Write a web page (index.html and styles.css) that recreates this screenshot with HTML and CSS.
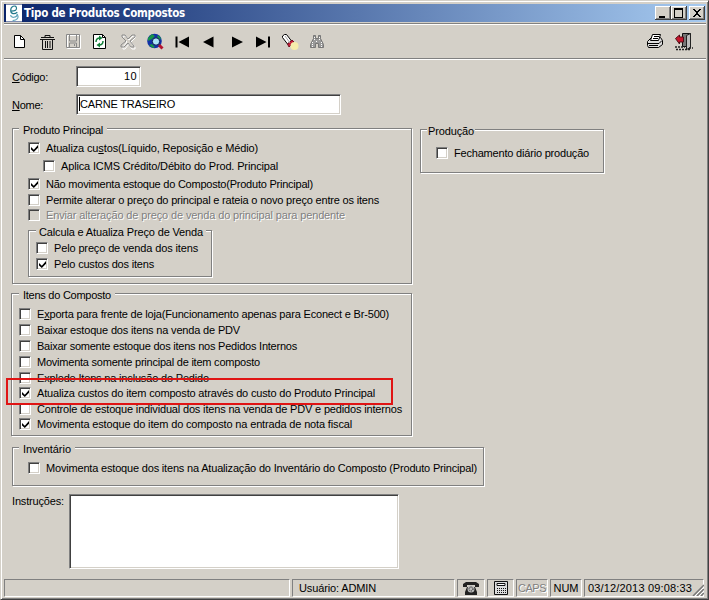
FILE: index.html
```html
<!DOCTYPE html>
<html lang="pt-BR">
<head>
<meta charset="utf-8">
<title>Tipo de Produtos Compostos</title>
<link rel="stylesheet" href="styles.css">
</head>
<body>
<div class="window">
  <header class="titlebar">
    <svg class="logo" viewBox="0 0 17 18"><path fill="#fff" d="M0 0h17v18H0z"/><path d="M5 7c5 0 7-1 6-4S5 2 5 6s4 5 7 2" fill="none" stroke="#247a8c" stroke-width="1.300"/><path d="M5 11c0 4 7 3 7-1 2 4 0 7-5 7" fill="none" stroke="#69a9bd" stroke-width="1.300"/></svg>
    <h1 data-width="161">Tipo de Produtos Compostos</h1>
    <div class="controls">
      <button aria-label="Minimizar"><svg viewBox="0 0 16 14"><path d="M4 10h6v2H4z"/></svg></button>
      <button aria-label="Maximizar"><svg viewBox="0 0 16 14"><path fill-rule="evenodd" d="M3 2h9v10H3zM4 4v7h7V4z"/></svg></button>
      <button class="close" aria-label="Fechar"><svg viewBox="0 0 16 14"><path d="M4 3h2v1h1v1h2V4h1V3h2v1h-1v1h-1v1H9v2h1v1h1v1h1v1h-2v-1H9V9H7v1H6v1H4v-1h1V9h1V8h1V6H6V5H5V4H4z"/></svg></button>
    </div>
  </header>
  <nav class="toolbar">
    <svg class="new" viewBox="0 0 18 18"><path d="M4.500 2.500h6l4 4v8h-10z" fill="#fff" stroke="#000"/><path d="M10.500 2.500v4h4" fill="none" stroke="#000"/></svg>
    <svg class="trash" viewBox="0 0 18 18"><path d="M3 4.500h13M7 4V2.500h5V4M2 6.500h15M4.500 7v9.500h10V7M7.500 8v7M9.500 8v7M12 8v7" fill="none" stroke="#111"/></svg>
    <svg class="save" viewBox="0 0 18 18"><path d="M3.500 2.500h13v13h-13z" fill="none" stroke="#fff"/><path d="M2.500 1.500h13v13h-13zM5.500 2v6h7V2M5.500 14v-4h7v4M10.500 11v2" fill="none" stroke="#888"/></svg>
    <svg class="refresh" viewBox="0 0 18 18"><path d="M3.500 1.500h9l3 3v11h-12z" fill="#fff" stroke="#000"/><path d="M12.500 1.500v3h3" fill="none" stroke="#000"/><path d="M6 9c0-3 2-4 4-4M13 8c0 3-2 4-4 4" fill="none" stroke="#14803a" stroke-width="1.500"/><path d="M9 2.500l3.500 2.500L9 7.500zM10 9.500v5L6.500 12z" fill="#14803a"/></svg>
    <svg class="cancel" viewBox="0 0 18 18"><path d="M4 3h3l3 4 4-4h2v2l-4 4 4 5v2h-3l-3-5-4 5H4v-2l4-5-4-4z" fill="none" stroke="#fff"/><path d="M3 2h3l3 4 4-4h3v2l-5 4 4 5v1h-3l-3-4-4 4H2v-2l5-4-4-4z" fill="none" stroke="#8b8b8b"/></svg>
    <svg class="search" viewBox="0 0 18 18"><circle cx="8.500" cy="8" r="7.300" fill="#102fa8"/><path d="M2 5l4-4 3 2-3 3-4 2zM12 2l3 3-1 2-3-3zM3 12l3-1 3 3-2 1z" fill="#159449"/><circle cx="10" cy="8.500" r="3.700" fill="#a9e4f6" stroke="#081b50"/><path d="M13 12l3.500 3.500" stroke="#b3132f" stroke-width="3"/></svg>
    <svg class="first" viewBox="0 0 18 18"><path d="M2.500 3.500h2v11h-2zM16 3.500v11L5.500 9z"/></svg>
    <svg class="prev" viewBox="0 0 18 18"><path d="M14.500 3.500v11L4 9z"/></svg>
    <svg class="next" viewBox="0 0 18 18"><path d="M5 3.500v11L16 9z"/></svg>
    <svg class="last" viewBox="0 0 18 18"><path d="M2 3.500v11L12.500 9zM14 3.500h2v11h-2z"/></svg>
    <svg class="torch" viewBox="0 0 18 18"><path d="M1.500 3l2-1.500h2l5 6.500-4 3-5-6.500z" fill="#fff" stroke="#000"/><path d="M11 7l2 2-5 5-1.500-3z" fill="#c51a38" stroke="#721020"/><circle cx="13.500" cy="13" r="4" fill="#f6edac"/><path d="M4 3l5 7" stroke="#aaa"/></svg>
    <svg class="binoculars" viewBox="0 0 18 18"><path d="M5.500 2.500h2v3h3v-3h2v3l3 6v3h-5v-4h-3v4h-5v-3l3-6z" fill="#999" stroke="#777"/><path d="M6.500 4v3m5-3v3M4.500 9v5m9-5v5M8 8.500h2" stroke="#fff" stroke-dasharray="1 1"/></svg>
    <svg class="printer" viewBox="0 0 18 18"><path d="M1.500 8.500l4-4h9l2 3v4l-4 3h-10l-1-2z" fill="#ddd" stroke="#000"/><path d="M4.500 7.500l2-6h8l-2 6z" fill="#fff" stroke="#000"/><path d="M8 3.500h5M7 5.500h5M2 10.500h11l3-3M3 12.500h9" fill="none" stroke="#000"/></svg>
    <svg class="exit" viewBox="0 0 18 18"><path d="M7.500.5h8v13h-8z" fill="#777" stroke="#111"/><path d="M11.500 2.500l4-2v14l-4 2z" fill="#bbb" stroke="#222"/><path d="M.5 5.500l4-3.500v2h4v5h-4v2z" fill="#c7172e" stroke="#4e1018"/><path d="M0 14h10M14 15h4M1 16.500h14" stroke="#222" stroke-width="1.500" stroke-dasharray="2 1"/></svg>
  </nav>

  <main>
    <div class="field code"><label for="codigo" data-width="36"><u>C</u>ódigo:</label><div class="input" id="codigo"><span data-width="13">10</span></div></div>
    <div class="field name"><label for="nome" data-width="31"><u>N</u>ome:</label><div class="input" id="nome"><i></i><span data-width="95">CARNE TRASEIRO</span></div></div>
    <div class="columns">
      <section class="group product">
        <h2 data-width="80">Produto Principal</h2>
        <div class="check r18"><b class="on"></b><span data-width="212">Atualiza cu<u>s</u>tos(Líquido, Reposição e Médio)</span></div>
        <div class="check r18 indent"><b></b><span data-width="217">Aplica ICMS Crédito/Débito do Prod. Principal</span></div>
        <div class="check r18"><b class="on"></b><span data-width="267">Não movimenta estoque do Composto(Produto Principal)</span></div>
        <div class="check r14"><b></b><span data-width="333">Permite alterar o preço do principal e rateia o novo preço entre os itens</span></div>
        <div class="check disabled"><b></b><span data-width="299">Enviar alteração de preço de venda do principal para pendente</span></div>
        <section class="group sale">
          <h2 data-width="164">Calcula e Atualiza Preço de Venda</h2>
          <div class="check"><b></b><span data-width="144">Pelo preço de venda dos itens</span></div>
          <div class="check"><b class="on"></b><span data-width="100">Pelo custos dos itens</span></div>
        </section>
      </section>
      <section class="group production">
        <h2 data-width="46">Produção</h2>
        <div class="check"><b></b><span data-width="135">Fechamento diário produção</span></div>
      </section>
    </div>
    <section class="group items">
      <h2 data-width="88">Itens do Composto</h2>
      <div class="check"><b></b><span data-width="352">E<u>x</u>porta para frente de loja(Funcionamento apenas para Econect e Br-500)</span></div>
      <div class="check"><b></b><span data-width="203">Baixar estoque dos itens na venda de PDV</span></div>
      <div class="check"><b></b><span data-width="260">Baixar somente estoque dos itens nos Pedidos Internos</span></div>
      <div class="check"><b></b><span data-width="223">Movimenta somente principal de item composto</span></div>
      <div class="check r15"><b></b><span data-width="172">Explode Itens na inclusão do Pedido</span></div>
      <div class="check highlighted"><b class="on"></b><span data-width="338">Atualiza custos do item composto através do custo do Produto Principal</span></div>
      <div class="check r15"><b></b><span data-width="365">Controle de estoque individual dos itens na venda de PDV e pedidos internos</span></div>
      <div class="check"><b class="on"></b><span data-width="315">Movimenta estoque do item do composto na entrada de nota fiscal</span></div>
    </section>
    <section class="group inventory">
      <h2 data-width="48">Inventário</h2>
      <div class="check"><b></b><span data-width="431">Movimenta estoque dos itens na Atualização do Inventário do Composto (Produto Principal)</span></div>
    </section>
    <div class="instructions"><label data-width="52">Instruções:</label><div class="input"></div></div>
  </main>

  <footer class="status">
    <div></div>
    <div class="user"><span data-width="77">Usuário: ADMIN</span></div>
    <div><svg viewBox="0 0 18 14"><path d="M1 5V3l3-2h10l3 2v3h-4V4H5v2H1zM5 6h8l2 5v3H3v-3z" fill="#222"/><circle cx="9" cy="8" r="3.500" fill="#bbb"/><circle cx="9" cy="8" r="2" fill="none" stroke="#111" stroke-dasharray="1 1"/></svg></div>
    <div><svg viewBox="0 0 18 14"><path d="M2.500.5h13v13h-13z" fill="#ddd" stroke="#111"/><path d="M5 2.500h8v2H5z" fill="#fff" stroke="#111"/><path d="M5 7.500h9M5 9.500h9M5 11.500h9" stroke="#111" stroke-dasharray="1 1"/></svg></div>
    <div class="off"><span data-width="28">CAPS</span></div>
    <div><span data-width="25">NUM</span></div>
    <div class="clock"><span data-width="104">03/12/2013 09:08:33</span><svg class="grip" viewBox="0 0 12 12"><path d="M1 12L12 1M5 12l7-7M9 12l3-3" stroke="#777" stroke-width="1.500"/><path d="M3 12l9-9M7 12l5-5" stroke="#fff"/></svg></div>
  </footer>
</div>
<script src="script.js"></script>
</body>
</html>
```
FILE: styles.css
```css
*, *::before, *::after { box-sizing: border-box; }
body { margin: 0; background: #d4d0c8; }
body, button { font: 11px/14px "Liberation Sans", Arial, sans-serif; color: #000; }
h1, h2 { margin: 0; font-size: 11px; line-height: 14px; font-weight: normal; }
[data-width] { white-space: pre; flex: none; }
u { text-decoration: underline; text-underline-offset: 1px; text-decoration-thickness: 1px; }

.window {
  width: 709px; height: 600px; padding: 3px 2px 2px 3px;
  display: flex; flex-direction: column;
  background: #d4d0c8;
  border: 1px solid; border-color: #d4d0c8 #404040 #404040 #d4d0c8;
  box-shadow: inset 1px 1px #fff, inset -1px -1px #808080;
}
.titlebar {
  height: 18px; flex: none; display: flex; align-items: center;
  padding: 0 1px 0 2px; color: #fff;
  background: linear-gradient(90deg, #0a246a, #a6caf0);
}
.titlebar h1 { font: bold 11.5px/18px "DejaVu Sans Condensed", "DejaVu Sans", sans-serif; }
.logo { width: 16px; height: 18px; margin-right: 2px; }
.controls { margin-left: auto; display: flex; }
.controls button {
  width: 16px; height: 14px; padding: 0; border: 0; background: #d4d0c8;
  box-shadow: inset -1px -1px #404040, inset 1px 1px #fff, inset -2px -2px #808080;
}
.controls svg { display: block; width: 16px; height: 14px; shape-rendering: crispEdges; }
.controls .close { margin-left: 2px; }

.toolbar {
  height: 36px; flex: none; margin-top: 1px; padding: 2px 13px 0 6px;
  display: flex; align-items: center;
  border-top: 1px solid #808080; border-bottom: 1px solid #808080;
  box-shadow: inset 0 1px #fff, 0 1px #fff;
}
.toolbar svg { width: 18px; height: 18px; flex: none; margin-left: 9px; }
.toolbar .new { margin-left: 0; }
.toolbar .trash { margin-left: 10px; }
.toolbar .save, .toolbar .refresh, .toolbar .prev { margin-left: 8px; }
.toolbar .cancel { margin-left: 11px; }
.toolbar .next { margin-left: 10px; }
.toolbar .printer { margin-left: auto; }
.toolbar .exit { margin-left: 11px; }

main { flex: none; padding: 7px 0 0 8px; }
.field { display: flex; align-items: center; height: 21px; }
.field label { flex: none; width: 64px; }
.input {
  background: #fff; border: 1px solid; border-color: #808080 #fff #fff #808080;
  box-shadow: inset 1px 1px #404040, inset -1px -1px #d4d0c8;
}
.code .input { width: 65px; height: 21px; padding: 2px 3px; text-align: right; }
.name { margin-top: 7px; }
.name .input { width: 265px; height: 21px; display: flex; align-items: center; padding: 0 0 2px 2px; }
.name i { width: 1px; height: 14px; background: #000; }

.columns { display: flex; align-items: flex-start; gap: 8px; margin-top: 13px; }
.group { border: 1px solid #808080; box-shadow: inset 1px 1px #fff, 1px 1px #fff; }
.group h2 { width: fit-content; height: 15px; margin: -7px 0 0 6px; padding: 1px 4px 0; background: #d4d0c8; }
.product { width: 400px; height: 156px; padding-left: 15px; }
.product > h2 { margin-left: -9px; margin-bottom: 2px; }
.production { width: 184px; height: 44px; margin-top: 1px; padding-left: 15px; }
.production h2 { margin-left: -9px; padding: 1px 1px 0; margin-bottom: 7px; }
.sale { width: 184px; height: 47px; padding-left: 7px; margin-top: 7px; }
.group.sale h2 { margin-left: 0; padding: 1px 3px 0; margin-bottom: 1px; }
.items { width: 401px; height: 143px; margin: 9px 0 0 -1px; padding-left: 7px; }
.items h2 { margin-left: 0; margin-bottom: 4px; }
.inventory { width: 472px; height: 39px; margin-top: 11px; padding-left: 15px; }
.inventory h2 { margin-left: -9px; margin-bottom: 4px; }

.check { display: flex; align-items: center; gap: 6px; height: 16px; }
.check b {
  width: 12px; height: 12px; flex: none; background: #fff;
  border: 1px solid; border-color: #808080 #fff #fff #808080;
  box-shadow: inset 1px 1px #404040, inset -1px -1px #d4d0c8;
}
.check .on::after { content: ""; display: block; width: 7px; height: 7px; margin: 2px 0 0 2px; background: #000; clip-path: polygon(0 28%, 40% 68%, 100% 0, 100% 38%, 40% 100%, 0 65%); }
.r18 { height: 18px; }
.r15 { height: 15px; }
.r14 { height: 14px; }
.indent { padding-left: 15px; }
.disabled { color: #808080; text-shadow: 1px 1px #fff; }
.disabled b { background: #d4d0c8; }
.highlighted { position: relative; }
.highlighted::after { content: ""; position: absolute; left: -13px; top: -7px; width: 387px; height: 27px; border: 2px solid #e01414; z-index: 1; }

.instructions { display: flex; margin-top: 8px; }
.instructions label { width: 57px; }
.instructions .input { width: 330px; height: 75px; }

.status { height: 18px; margin-top: auto; display: grid; grid-template-columns: 286px 163px 28px 27px 32px 32px 120px; gap: 2px; }
.status > div { display: flex; align-items: center; justify-content: center; min-width: 0; border: 1px solid; border-color: #808080 #fff #fff #808080; }
.status .user { justify-content: flex-start; padding-left: 6px; }
.status svg { width: 18px; height: 14px; }
.status .off { color: #808080; text-shadow: 1px 1px #fff; }
.status .clock { justify-content: flex-start; padding-left: 3px; }
.status .grip { width: 12px; height: 12px; flex: none; align-self: flex-end; margin-left: 0; }
```
FILE: script.js
```js
// Spreads each label's glyphs so that it fills its design width.
document.querySelectorAll('[data-width]').forEach(function (el) {
  var range = document.createRange();
  range.selectNodeContents(el);
  var natural = range.getBoundingClientRect().width;
  var spacing = (Number(el.dataset.width) - natural) / el.textContent.length;
  el.style.letterSpacing = spacing.toFixed(3) + 'px';
});
```
